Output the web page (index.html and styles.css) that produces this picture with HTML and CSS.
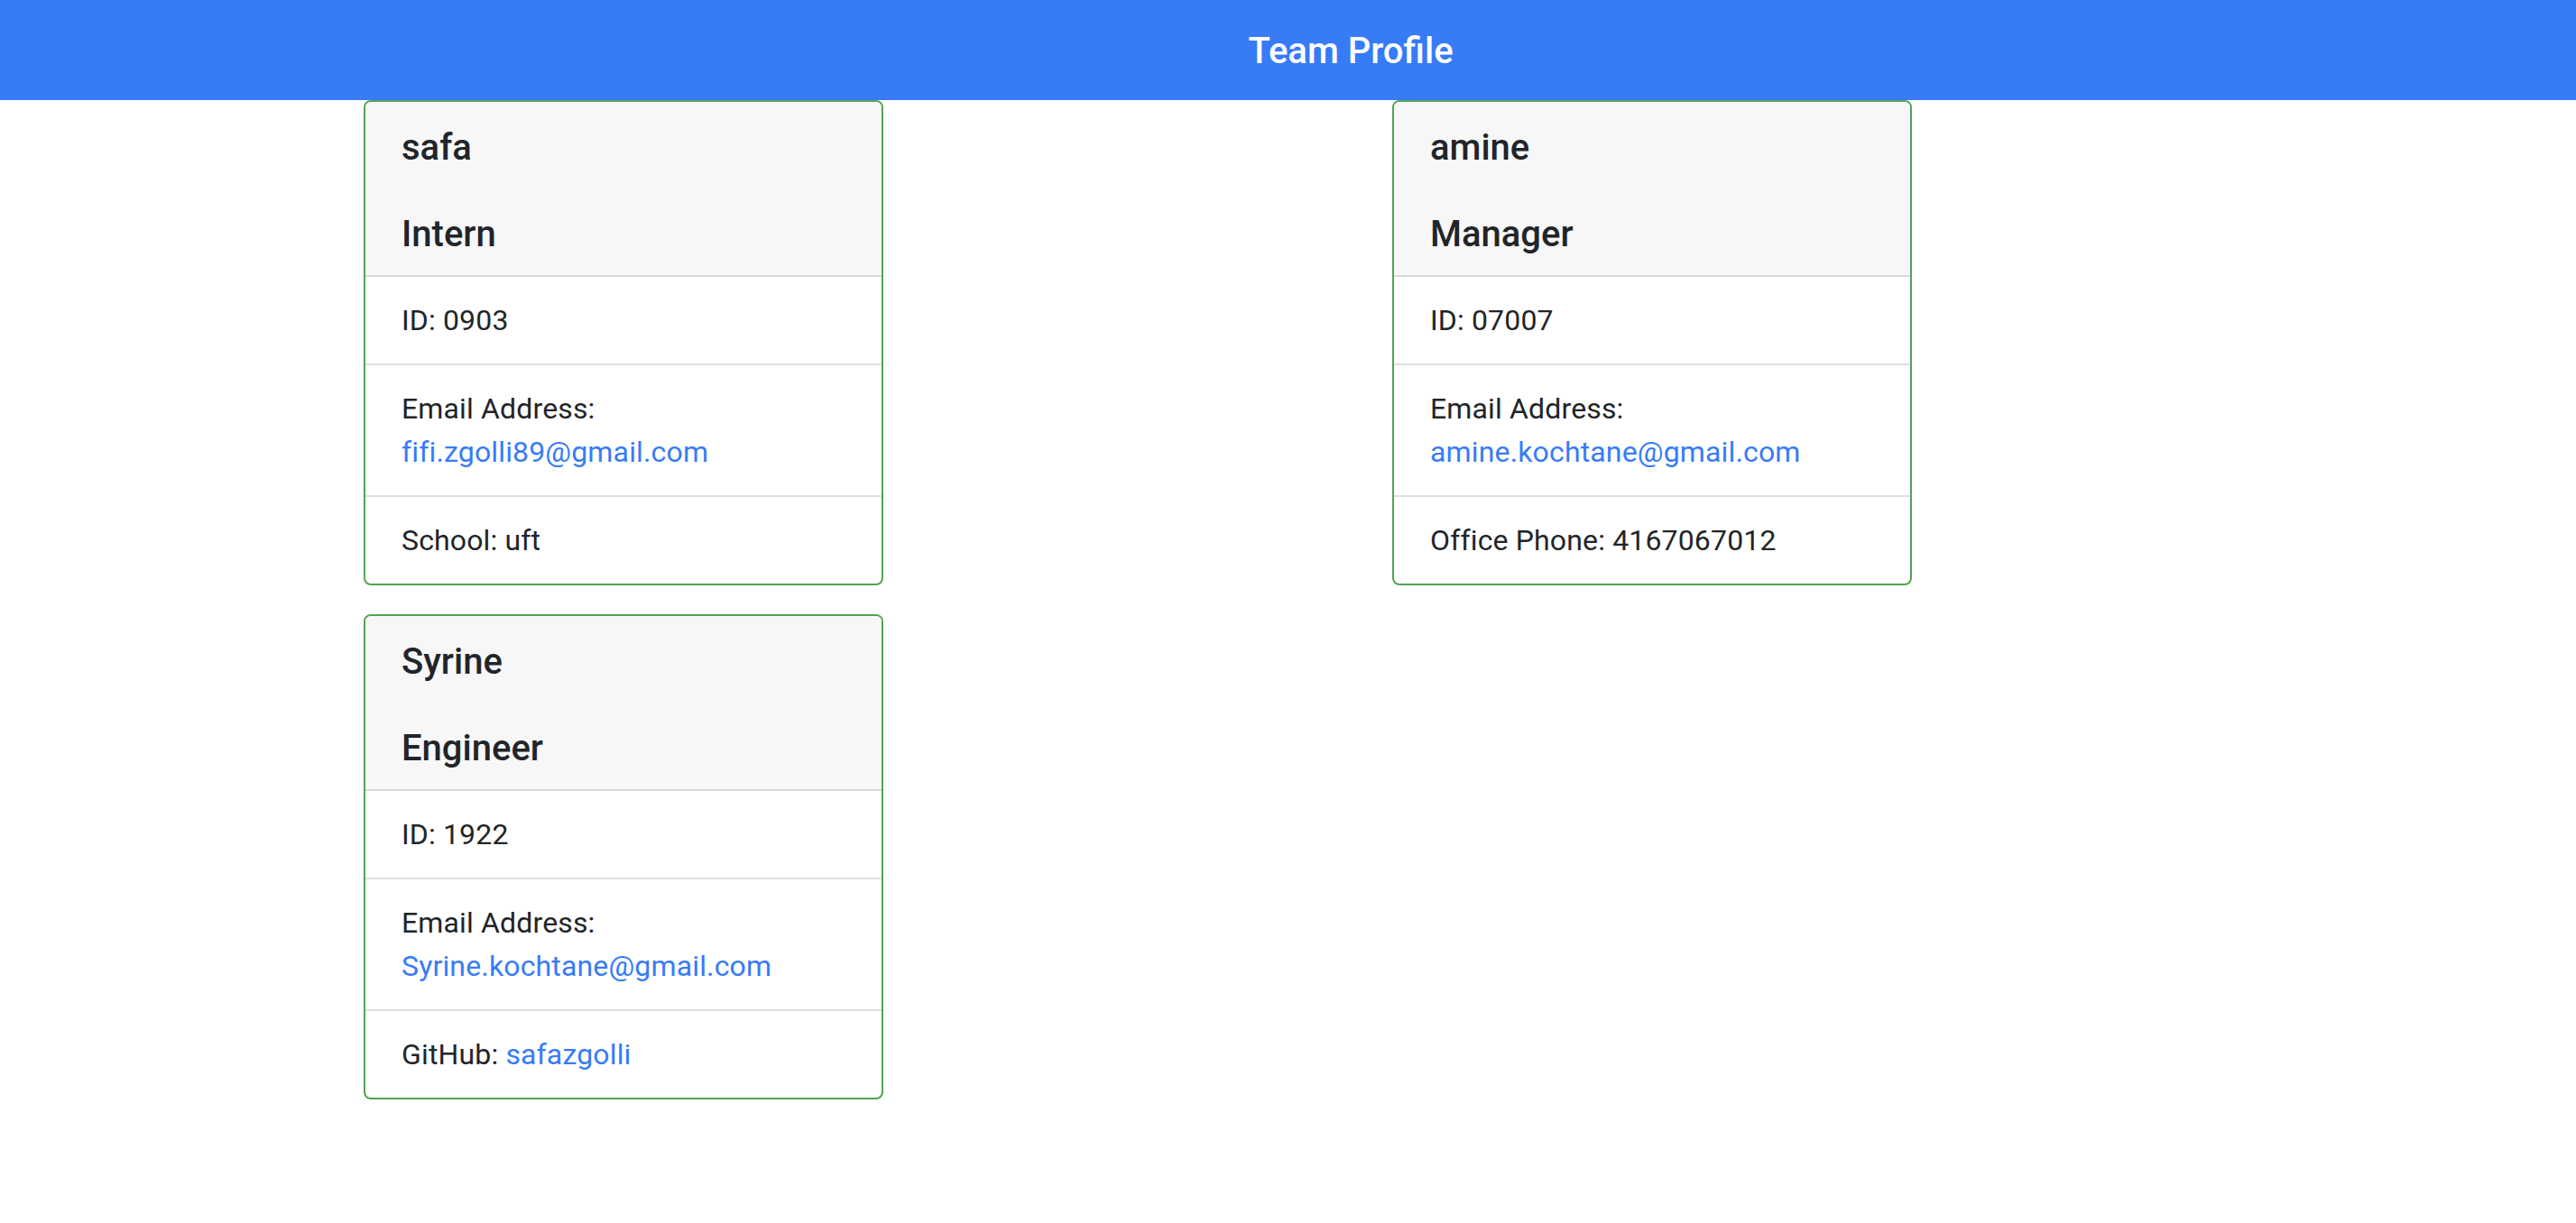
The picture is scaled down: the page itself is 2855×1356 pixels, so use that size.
FILE: index.html
```html
<!DOCTYPE html>
<html lang="en">
<head>
<meta charset="utf-8">
<title>Team Profile</title>
<link rel="stylesheet" href="styles.css">
</head>
<body>
<header class="topbar">
  <span class="brand">Team Profile</span>
</header>
<main class="team">
  <div class="card">
    <div class="card-header">
      <h5 class="name">safa</h5>
      <h5 class="role">Intern</h5>
    </div>
    <ul class="list">
      <li class="item">ID: 0903</li>
      <li class="item">Email Address:<br><a class="link" href="#">fifi.zgolli89@gmail.com</a></li>
      <li class="item">School: uft</li>
    </ul>
  </div>
  <div class="card">
    <div class="card-header">
      <h5 class="name">amine</h5>
      <h5 class="role">Manager</h5>
    </div>
    <ul class="list">
      <li class="item">ID: 07007</li>
      <li class="item">Email Address:<br><a class="link" href="#">amine.kochtane@gmail.com</a></li>
      <li class="item">Office Phone: 4167067012</li>
    </ul>
  </div>
  <div class="card">
    <div class="card-header">
      <h5 class="name">Syrine</h5>
      <h5 class="role">Engineer</h5>
    </div>
    <ul class="list">
      <li class="item">ID: 1922</li>
      <li class="item">Email Address:<br><a class="link" href="#">Syrine.kochtane@gmail.com</a></li>
      <li class="item">GitHub: <a class="link" href="#">safazgolli</a></li>
    </ul>
  </div>
</main>
</body>
</html>
```
FILE: styles.css
```css
html, body {
  margin: 0;
  padding: 0;
  background: #ffffff;
}
body {
  font-family: Roboto, "Liberation Sans", Arial, sans-serif;
  font-size: 32px;
  line-height: 48px;
  color: #212529;
}
.topbar {
  height: 111px;
  background: #377bf7;
  display: flex;
  align-items: center;
  justify-content: center;
  padding-left: 139px;
  padding-top: 3px;
  box-sizing: border-box;
}
.brand {
  color: #ffffff;
  font-size: 40px;
  font-weight: 500;
  line-height: 60px;
}
.team {
  display: grid;
  grid-template-columns: 576px 576px;
  column-gap: 564px;
  row-gap: 32px;
  padding-left: 403px;
  align-items: start;
}
.card {
  box-sizing: border-box;
  width: 576px;
  border: 2px solid #52a552;
  border-radius: 8px;
  overflow: hidden;
  background: #ffffff;
}
.card-header {
  background: #f7f7f7;
  padding: 27px 40px 21px;
  border-bottom: 2px solid #d9d9d9;
}
.name, .role {
  margin: 0;
  font-size: 40px;
  line-height: 48px;
  font-weight: 500;
}
.name {
  margin-bottom: 48px;
}
.list {
  list-style: none;
  margin: 0;
  padding: 0;
}
.item {
  padding: 24px 40px;
  border-bottom: 2px solid #dfdfdf;
  letter-spacing: 0.15px;
}
.item:last-child {
  border-bottom: 0;
}
.link {
  color: #377bf7;
  text-decoration: none;
}
```
